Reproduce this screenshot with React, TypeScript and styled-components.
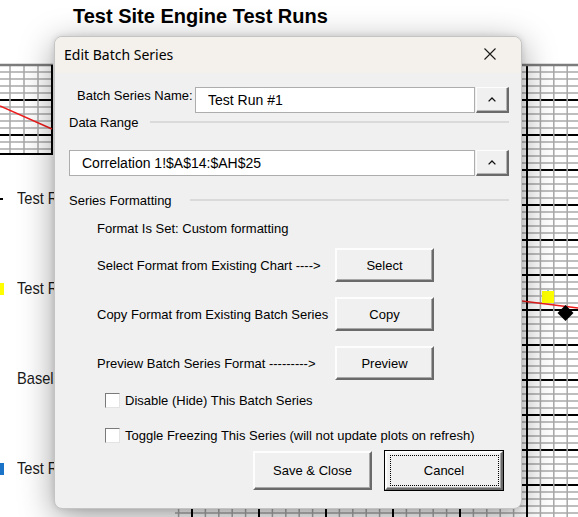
import React from "react";
import styled, { createGlobalStyle } from "styled-components";

const Global = createGlobalStyle`
  html, body { margin: 0; padding: 0; background: #ffffff; }
  body {
    width: 578px;
    height: 517px;
    overflow: hidden;
    font-family: "Liberation Sans", Arial, sans-serif;
    color: #000;
  }
  * { box-sizing: border-box; }
`;

/* ---------- Background worksheet / chart ---------- */

const Sheet = styled.div`
  position: relative;
  width: 578px;
  height: 517px;
  overflow: hidden;
  background: #ffffff;
`;

const ChartDrawing = styled.svg`
  position: absolute;
  left: 0;
  top: 0;
`;

const ChartTitle = styled.h1`
  position: relative;
  margin: 0;
  padding: 5px 0 0 73px;
  font-family: "Liberation Sans", Arial, sans-serif;
  font-weight: 700;
  font-size: 20px;
  line-height: 23px;
  color: #000;
`;

const Legend = styled.ul`
  position: relative;
  list-style: none;
  width: 54px;
  overflow: hidden;
  margin: 161px 0 0 0;
  padding: 0;
  display: flex;
  flex-direction: column;
  gap: 70px;
`;

const LegendItem = styled.li`
  display: flex;
  align-items: center;
  height: 20px;
  font-size: 17px;
  color: #1a1a1a;
  white-space: nowrap;
`;

const LegendText = styled.span`
  display: inline-block;
  transform: scaleX(0.86);
  transform-origin: left center;
`;

type MarkerKind = "dash" | "yellow" | "none" | "blue";

const LegendMarker = styled.span<{ $kind: MarkerKind }>`
  flex: 0 0 auto;
  width: ${(p) => (p.$kind === "none" ? 0 : p.$kind === "dash" ? 3 : 4)}px;
  height: ${(p) => (p.$kind === "dash" ? 2 : p.$kind === "none" ? 0 : 12)}px;
  margin-right: ${(p) => (p.$kind === "none" ? 17 : p.$kind === "dash" ? 14 : 13)}px;
  background: ${(p) =>
    p.$kind === "yellow" ? "#ffff00" : p.$kind === "blue" ? "#1b73c8" : "#000"};
`;

const ChartBackdrop: React.FC = () => {
  const items: React.ReactNode[] = [];
  const gray = "#a8a8a8";
  // Plot A (left, partially visible)
  for (let k = 1; 65 + 7 * k < 152; k++) {
    const y = 65 + 7 * k;
    const major = k % 5 === 0;
    items.push(
      <line key={`ah${k}`} x1={0} x2={52} y1={y} y2={y} stroke={major ? "#000" : gray} strokeWidth={major ? 2 : 1.5} />
    );
  }
  [10, 24, 38].forEach((x) =>
    items.push(<line key={`av${x}`} x1={x} x2={x} y1={65} y2={154} stroke={gray} strokeWidth={1.5} />)
  );
  items.push(<line key="aT" x1={0} x2={53} y1={65} y2={65} stroke="#7c7c7c" strokeWidth={2.5} />);
  items.push(<line key="aR" x1={52} x2={52} y1={65} y2={155} stroke="#000" strokeWidth={2} />);
  items.push(<line key="aB" x1={0} x2={53} y1={154} y2={154} stroke="#000" strokeWidth={2} />);
  items.push(<line key="aRed" x1={0} x2={52} y1={106} y2={129} stroke="#ee1c1c" strokeWidth={1.4} />);

  // Plot B (right and bottom, partially visible)
  for (let k = 1; 65 + 7 * k <= 520; k++) {
    const y = 65 + 7 * k;
    const major = k % 5 === 0;
    items.push(
      <line key={`bh${k}`} x1={175} x2={578} y1={y} y2={y} stroke={major ? "#000" : gray} strokeWidth={major ? 2 : 1.5} />
    );
  }
  for (let j = -30; j <= 5; j++) {
    const x = 527 + 13.4 * j;
    if (x < 175 || x > 580) continue;
    const major = ((j % 5) + 5) % 5 === 0;
    items.push(
      <line key={`bv${j}`} x1={x} x2={x} y1={65} y2={517} stroke={major ? "#000" : gray} strokeWidth={major ? 2 : 1.5} />
    );
  }
  items.push(<line key="bT" x1={175} x2={578} y1={65} y2={65} stroke="#7c7c7c" strokeWidth={2.5} />);
  items.push(<line key="bRed" x1={175} x2={578} y1={258} y2={308} stroke="#ee1c1c" strokeWidth={1.4} />);
  items.push(<rect key="bY" x={542} y={291} width={12} height={12} fill="#ffff00" />);
  items.push(<rect key="bYd" x={547} y={290} width={2} height={1} fill="#8fc7e8" />);
  items.push(<polygon key="bD" points="565.5,305 573.5,313 565.5,321 557.5,313" fill="#000" />);

  return (
    <ChartDrawing width={578} height={517} viewBox="0 0 578 517">
      {items}
    </ChartDrawing>
  );
};

/* ---------- Dialog ---------- */

const Dialog = styled.div`
  position: absolute;
  left: 54px;
  top: 36px;
  width: 468px;
  height: 473px;
  border: 1px solid #c4c4c4;
  border-radius: 8px;
  overflow: hidden;
  background: #f0f0f0;
  box-shadow: 0 8px 34px rgba(0, 0, 0, 0.38), 0 0 6px rgba(0, 0, 0, 0.12);
  display: flex;
  flex-direction: column;
`;

const TitleBar = styled.div`
  flex: 0 0 36px;
  display: flex;
  align-items: center;
  justify-content: space-between;
  padding: 0 25px 2px 9px;
  background: #f4f0eb;
`;

const TitleText = styled.span`
  font-family: "Noto Sans", "Open Sans", sans-serif;
  font-size: 14px;
  color: #000;
`;

const CloseIcon: React.FC = () => (
  <svg width={12} height={12} viewBox="0 0 12 12">
    <path d="M0.5 0.5 L11.5 11.5 M11.5 0.5 L0.5 11.5" stroke="#1a1a1a" strokeWidth={1.1} fill="none" />
  </svg>
);

const Body = styled.div`
  flex: 1;
  display: flex;
  flex-direction: column;
  padding: 14px 12px 0 14px;
  font-size: 13px;
`;

const FieldRow = styled.div<{ $top?: number }>`
  display: flex;
  align-items: stretch;
  height: 26px;
  margin-top: ${(p) => p.$top ?? 0}px;
`;

const FieldLabel = styled.span`
  flex: 0 0 126px;
  padding-left: 8px;
  display: flex;
  align-items: center;
  font-size: 13px;
  padding-bottom: 10px;
`;

const TextField = styled.div`
  flex: 1;
  display: flex;
  align-items: center;
  padding-left: 12px;
  background: #ffffff;
  border: 1px solid #adadad;
  font-size: 14px;
  color: #000;
  white-space: nowrap;
`;

const PickButton = styled.div`
  flex: 0 0 33px;
  margin-left: 1px;
  display: flex;
  align-items: center;
  justify-content: center;
  background: #f0f0f0;
  border-top: 1px solid #fdfdfd;
  border-left: 1px solid #fdfdfd;
  border-right: 2px solid #6a6a6a;
  border-bottom: 2px solid #6a6a6a;
  box-shadow: inset -1px -1px 0 #b4b4b4;
`;

const Chevron: React.FC = () => (
  <svg width={8} height={5} viewBox="0 0 8 5">
    <polyline points="0.6,4.4 4,1 7.4,4.4" fill="none" stroke="#111" strokeWidth={1.3} />
  </svg>
);

const SectionHeader = styled.div<{ $top: number; $gap: number }>`
  display: flex;
  align-items: center;
  height: 16px;
  margin-top: ${(p) => p.$top}px;
  gap: ${(p) => p.$gap}px;
  font-size: 13px;
`;

const Rule = styled.div`
  flex: 1;
  height: 2px;
  background: #dadada;
`;

const InfoText = styled.div<{ $top: number }>`
  height: 16px;
  display: flex;
  align-items: center;
  margin-top: ${(p) => p.$top}px;
  padding-left: 28px;
  font-size: 13px;
`;

const ActionRow = styled.div<{ $top: number }>`
  display: flex;
  align-items: center;
  height: 34px;
  margin-top: ${(p) => p.$top}px;
  padding-left: 28px;
`;

const ActionLabel = styled.span`
  flex: 0 0 238px;
  font-size: 13px;
  white-space: nowrap;
`;

const ClassicButton = styled.div<{ $width: number; $height: number; $default?: boolean }>`
  position: relative;
  flex: 0 0 ${(p) => p.$width}px;
  width: ${(p) => p.$width}px;
  height: ${(p) => p.$height}px;
  display: flex;
  align-items: center;
  justify-content: center;
  background: #f0f0f0;
  font-size: 13px;
  color: #000;
  border-top: 2px solid #fdfdfd;
  border-left: 2px solid #fdfdfd;
  border-right: 2px solid #6a6a6a;
  border-bottom: 2px solid #6a6a6a;
  box-shadow: inset -1px -1px 0 #a8a8a8;
  ${(p) =>
    p.$default
      ? `
    outline: 1px solid #000;
    outline-offset: 0;
    &::after {
      content: "";
      position: absolute;
      left: 3px;
      top: 2px;
      right: 2px;
      bottom: 2px;
      border: 1px dotted #000;
    }
  `
      : ""}
`;

const CheckRow = styled.label<{ $top: number }>`
  display: flex;
  align-items: center;
  gap: 5px;
  height: 16px;
  margin-top: ${(p) => p.$top}px;
  padding-left: 36px;
  font-size: 13px;
  white-space: nowrap;
`;

const CheckBox = styled.span`
  flex: 0 0 15px;
  width: 15px;
  height: 15px;
  background: #ffffff;
  border-top: 1px solid #7a7a7a;
  border-left: 1px solid #7a7a7a;
  border-right: 1px solid #e3e3e3;
  border-bottom: 1px solid #e3e3e3;
`;

const Footer = styled.div`
  display: flex;
  justify-content: flex-end;
  align-items: flex-start;
  gap: 13px;
  margin-top: 8px;
  padding-right: 6px;
`;

const actions = [
  { label: "Select Format from Existing Chart ---->", button: "Select", top: 12 },
  { label: "Copy Format from Existing Batch Series", button: "Copy", top: 15 },
  { label: "Preview Batch Series Format --------->", button: "Preview", top: 15 },
];

const checks = [
  { label: "Disable (Hide) This Batch Series", top: 12 },
  { label: "Toggle Freezing This Series (will not update plots on refresh)", top: 19 },
];

const legend: { text: string; kind: MarkerKind }[] = [
  { text: "Test Run #1", kind: "dash" },
  { text: "Test Run #2", kind: "yellow" },
  { text: "Baseline", kind: "none" },
  { text: "Test Run #3", kind: "blue" },
];

export default function App() {
  return (
    <>
      <Global />
      <Sheet>
        <ChartBackdrop />
        <ChartTitle>Test Site Engine Test Runs</ChartTitle>
        <Legend>
          {legend.map((l) => (
            <LegendItem key={l.text}>
              <LegendMarker $kind={l.kind} />
              <LegendText>{l.text}</LegendText>
            </LegendItem>
          ))}
        </Legend>

        <Dialog role="dialog" aria-label="Edit Batch Series">
          <TitleBar>
            <TitleText>Edit Batch Series</TitleText>
            <CloseIcon />
          </TitleBar>
          <Body>
            <FieldRow>
              <FieldLabel>Batch Series Name:</FieldLabel>
              <TextField>Test Run #1</TextField>
              <PickButton>
                <Chevron />
              </PickButton>
            </FieldRow>

            <SectionHeader $top={1} $gap={12}>
              Data Range
              <Rule />
            </SectionHeader>

            <FieldRow $top={20}>
              <TextField>Correlation 1!$A$14:$AH$25</TextField>
              <PickButton>
                <Chevron />
              </PickButton>
            </FieldRow>

            <SectionHeader $top={16} $gap={18}>
              Series Formatting
              <Rule />
            </SectionHeader>

            <InfoText $top={12}>Format Is Set: Custom formatting</InfoText>

            {actions.map((a) => (
              <ActionRow key={a.button} $top={a.top}>
                <ActionLabel>{a.label}</ActionLabel>
                <ClassicButton $width={99} $height={34}>
                  {a.button}
                </ClassicButton>
              </ActionRow>
            ))}

            {checks.map((c) => (
              <CheckRow key={c.label} $top={c.top}>
                <CheckBox />
                {c.label}
              </CheckRow>
            ))}

            <Footer>
              <ClassicButton $width={119} $height={39}>
                Save &amp; Close
              </ClassicButton>
              <ClassicButton $width={118} $height={39} $default>
                Cancel
              </ClassicButton>
            </Footer>
          </Body>
        </Dialog>
      </Sheet>
    </>
  );
}
